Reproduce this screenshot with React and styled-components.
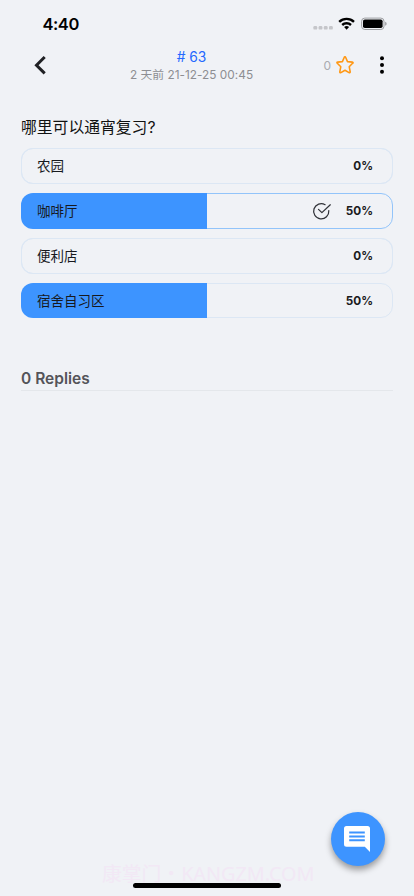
import React from 'react';
import styled, { createGlobalStyle } from 'styled-components';

const GlobalStyle = createGlobalStyle`
  *, *::before, *::after { box-sizing: border-box; }
  body { margin: 0; background: #f0f2f6; font-family: Inter, "Noto Sans CJK SC", sans-serif; }
  svg { display: block; flex: none; }
`;

const Screen = styled.main`
  position: relative;
  display: flex;
  flex-direction: column;
  width: 414px;
  height: 896px;
  overflow: hidden;
  background: #f0f2f6;
  color: #111;
`;

const StatusBar = styled.div`
  display: flex;
  align-items: center;
  height: 44px;
  padding: 3px 26px 0 42.5px;
`;

const Clock = styled.time`
  flex: 1;
  font-size: 16.5px;
  line-height: 20px;
  font-weight: 600;
  letter-spacing: -0.45px;
  color: #000;
`;

const StatusIcons = styled.div`
  display: flex;
  align-items: center;
`;

const Header = styled.header`
  display: grid;
  grid-template-columns: 82px 219px 1fr;
  height: 44px;
`;

const BackButton = styled.button`
  display: flex;
  align-items: center;
  border: 0;
  padding: 0 0 2px 34px;
  background: none;
`;

const Heading = styled.div`
  display: flex;
  flex-direction: column;
  align-items: center;
  padding-top: 4px;
  white-space: nowrap;
`;

const PostId = styled.h1`
  margin: 0;
  font-size: 13.8px;
  line-height: 18px;
  font-weight: 400;
  letter-spacing: -0.1px;
  color: #2469ff;
`;

const PostTime = styled.div`
  font-size: 11.8px;
  line-height: 19px;
  letter-spacing: 0.03px;
  color: #8d8e92;
`;

const Actions = styled.div`
  display: flex;
  align-items: center;
  padding: 0 0 2px 22.5px;
`;

const StarCount = styled.span`
  width: 12px;
  font-size: 12px;
  color: #a9abb0;
`;

const Content = styled.section`
  padding: 28px 21px 0;
`;

const Question = styled.h2`
  margin: 0 0 8px;
  height: 24px;
  font-size: 15.8px;
  line-height: 24px;
  font-weight: 400;
  color: #111;
`;

const Poll = styled.div`
  display: flex;
  flex-direction: column;
  gap: 9px;
`;

const Option = styled.div`
  display: flex;
  align-items: center;
  height: ${({ $compact }) => ($compact ? 35 : 36)}px;
  padding: 0 20px 0 16px;
  border-radius: 12px;
  background: linear-gradient(#3d94ff, #3d94ff) left / ${({ $share }) => $share}% 100% no-repeat;
  box-shadow: ${({ $share, $chosen }) => ($share ? 'none' : `inset 0 0 0 1px ${$chosen ? '#92c4fa' : '#dce7f4'}`)};
  position: relative;

  &::after {
    content: '';
    position: absolute;
    inset: 0;
    border: 1px solid ${({ $chosen }) => ($chosen ? '#92c4fa' : '#dce7f4')};
    border-radius: inherit;
    clip-path: inset(0 0 0 ${({ $share }) => $share}%);
    pointer-events: none;
  }
`;

const OptionLabel = styled.span`
  flex: 1;
  font-size: 13.5px;
  line-height: 20px;
  color: #17191d;
`;

const Percent = styled.span`
  width: 42px;
  text-align: right;
  font-size: 11.7px;
  line-height: 16px;
  font-weight: 700;
  color: #1a1a1c;
`;

const Replies = styled.h3`
  margin: 50px 0 0;
  height: 23px;
  border-bottom: 1px solid #e4e7eb;
  font-size: 15.5px;
  line-height: 21px;
  font-weight: 600;
  color: #545459;
`;

const CommentButton = styled.button`
  position: absolute;
  left: 331px;
  top: 812px;
  display: flex;
  align-items: center;
  justify-content: center;
  width: 54px;
  height: 54px;
  padding: 0 2px 0 0;
  border: 0;
  border-radius: 50%;
  background: #3d94ff;
  box-shadow: 0 4px 6px rgba(0, 0, 0, 0.36);
`;

const Watermark = styled.div`
  position: absolute;
  left: 102px;
  top: 860px;
  font-family: "Noto Sans", "Noto Sans CJK SC", sans-serif;
  font-size: 19.8px;
  line-height: 28px;
  white-space: nowrap;
  color: #f2e8f5;
`;

const HomeIndicator = styled.div`
  position: absolute;
  left: 133px;
  top: 883px;
  width: 148px;
  height: 5px;
  border-radius: 3px;
  background: #000;
`;

const OPTIONS = [
  { label: '农园', share: 0 },
  { label: '咖啡厅', share: 50, chosen: true },
  { label: '便利店', share: 0 },
  { label: '宿舍自习区', share: 50, compact: true },
];

function StatusSymbols() {
  return (
    <StatusIcons>
      <svg width="75" height="16" viewBox="0 0 75 16">
        <g fill="#c5c6ca">
          <rect x="0.4" y="10" width="3.8" height="3.6" rx="1.2" />
          <rect x="5.6" y="10" width="3.8" height="3.6" rx="1.2" />
          <rect x="10.8" y="10" width="3.8" height="3.6" rx="1.2" />
          <rect x="16" y="10" width="3.8" height="3.6" rx="1.2" />
        </g>
        <g fill="none" stroke="#000" strokeWidth="2.4">
          <path d="M26.2 5.8a10.8 10.8 0 0 1 14.8 0" />
          <path d="M29.2 9a6.5 6.5 0 0 1 8.8 0" />
        </g>
        <path d="M31.1 11.1a3.8 3.8 0 0 1 5 0l-2.5 2.6z" fill="#000" />
        <rect x="48.6" y="2.1" width="22.4" height="11.4" rx="3.2" fill="none" stroke="#9d9ea1" />
        <rect x="50" y="3.5" width="19.6" height="8.6" rx="1.8" />
        <path d="M72.2 5.8v4c1.9-.6 1.9-3.4 0-4z" fill="#96979a" />
      </svg>
    </StatusIcons>
  );
}

function BackIcon() {
  return (
    <svg width="13" height="20" viewBox="0 0 13 20" fill="none" stroke="#202124" strokeWidth="3">
      <path d="M10.7 2 2.5 10.2l8.2 8.2" />
    </svg>
  );
}

function StarIcon() {
  return (
    <svg width="18" height="18" viewBox="0 0 18 18" fill="none" stroke="#ff9815" strokeWidth="1.6" strokeLinejoin="round">
      <path d="M8.3 1.3Q9 0.2 9.6 1.3L11.5 5.6 16.3 6.1Q17.6 6.4 16.6 7.3L13.2 10.7 14.2 15.8Q14.2 17.1 13 16.6L9 14.2 4.9 16.6Q3.7 17.1 3.8 15.8L4.8 10.7 1.3 7.3Q.4 6.4 1.7 6.1L6.4 5.6Z" />
    </svg>
  );
}

const DotsSlot = styled.div`
  padding-left: 25px;
`;

const CheckSlot = styled.div`
  margin-right: -1px;
`;

function CheckIcon() {
  return (
    <svg width="20" height="18" viewBox="0 0 20 18" fill="none" stroke="#303238" strokeWidth="1.25" strokeLinecap="round" strokeLinejoin="round">
      <path d="M13.1 2.7A7.6 7.6 0 1 0 16.8 8.6" />
      <path d="m6.5 7.4 3.4 3.2 8.4-7.8" />
    </svg>
  );
}

export default function App() {
  return (
    <>
      <GlobalStyle />
      <Screen>
        <StatusBar>
          <Clock>4:40</Clock>
          <StatusSymbols />
        </StatusBar>
        <Header>
          <BackButton aria-label="Back"><BackIcon /></BackButton>
          <Heading>
            <PostId># 63</PostId>
            <PostTime>2 天前 21-12-25 00:45</PostTime>
          </Heading>
          <Actions>
            <StarCount>0</StarCount>
            <StarIcon />
            <DotsSlot>
              <svg width="6" height="18" viewBox="0 0 6 18">
                <circle cx="3" cy="2.2" r="2" />
                <circle cx="3" cy="9" r="2" />
                <circle cx="3" cy="15.8" r="2" />
              </svg>
            </DotsSlot>
          </Actions>
        </Header>
        <Content>
          <Question>哪里可以通宵复习?</Question>
          <Poll>
            {OPTIONS.map(({ label, share, chosen, compact }) => (
              <Option key={label} $share={share} $chosen={chosen} $compact={compact}>
                <OptionLabel>{label}</OptionLabel>
                {chosen && <CheckSlot><CheckIcon /></CheckSlot>}
                <Percent>{share}%</Percent>
              </Option>
            ))}
          </Poll>
          <Replies>0 Replies</Replies>
        </Content>
        <Watermark>康掌门・KANGZM.COM</Watermark>
        <HomeIndicator />
        <CommentButton aria-label="Comment">
          <svg width="26" height="26" viewBox="0 0 26 26">
            <path fill="#fff" d="M2.5 0h21Q26 0 26 2.5V26l-5.2-5.2H2.5Q0 20.8 0 18.3V2.5Q0 0 2.5 0Z" />
            <path stroke="#3d94ff" strokeWidth="2" d="M5.2 6.5h15.6M5.2 10.4h15.6M5.2 14.3h15.6" />
          </svg>
        </CommentButton>
      </Screen>
    </>
  );
}
